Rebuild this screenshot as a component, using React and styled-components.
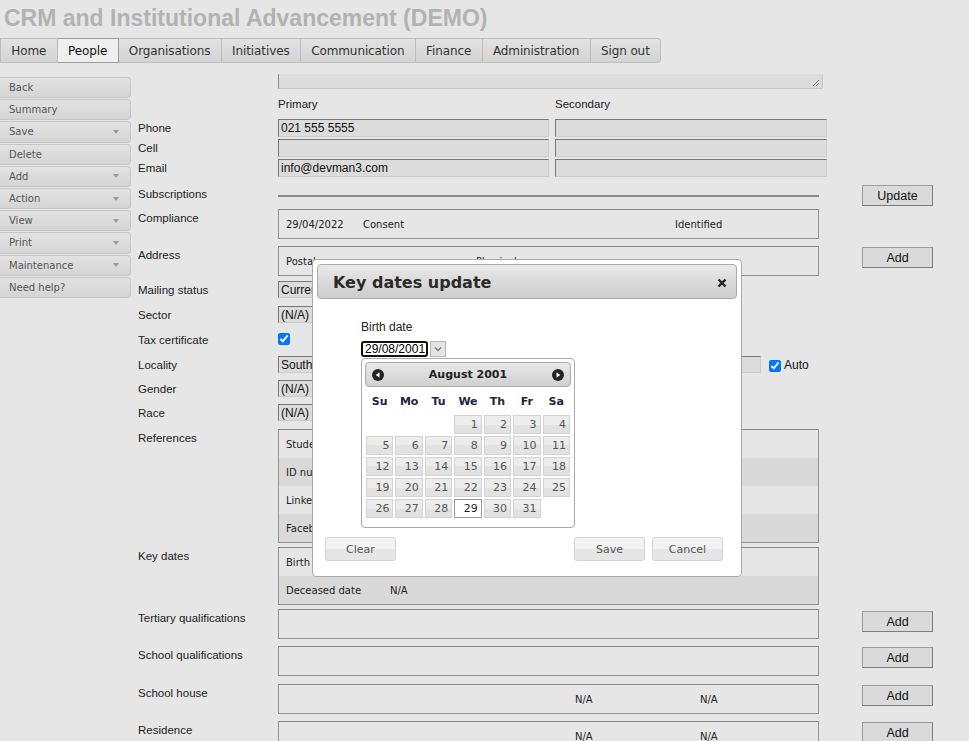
import React from 'react';
import styled, { createGlobalStyle } from 'styled-components';

const Global = createGlobalStyle`
  body {
    margin: 0;
    background: #e6e6e6;
    font-family: "Liberation Sans", Arial, sans-serif;
  }
`;

const Page = styled.div`
  position: relative;
  width: 969px;
  height: 741px;
  overflow: hidden;
`;

const Title = styled.h1`
  margin: 0;
  height: 38px;
  padding-left: 4px;
  font: bold 23px/37px "Liberation Sans", Arial, sans-serif;
  color: #b2b2b2;
`;

const NavBar = styled.nav`
  display: flex;
  height: 25px;
`;

const Tab = styled.div`
  display: flex;
  align-items: center;
  padding: 0 10.3px;
  font: 12px "DejaVu Sans", Verdana, sans-serif;
  letter-spacing: -0.1px;
  color: ${p => (p.$active ? '#111' : '#333')};
  background: ${p => (p.$active ? '#efefef' : 'linear-gradient(#e2e2e2, #d3d3d3)')};
  border: 1px solid ${p => (p.$active ? '#9d9d9d' : '#bdbdbd')};
  border-left: none;
  &:first-child { border-left: 1px solid #bdbdbd; }
  &:last-child { border-radius: 0 4px 4px 0; }
`;

const Main = styled.div`
  display: flex;
`;

const Sidebar = styled.div`
  width: 131px;
  margin-top: 14px;
  display: flex;
  flex-direction: column;
  gap: 1px;
`;

const SideButton = styled.div`
  height: 21.2px;
  box-sizing: border-box;
  display: flex;
  align-items: center;
  justify-content: space-between;
  padding: 0 11px 0 9px;
  font: 10px "DejaVu Sans", Verdana, sans-serif;
  color: #555;
  background: linear-gradient(#e2e2e2, #d5d5d5);
  border: 1px solid #c6c6c6;
  border-left: none;
  border-radius: 0 4px 4px 0;
`;

const Caret = styled.span`
  width: 0;
  height: 0;
  border-left: 3.5px solid transparent;
  border-right: 3.5px solid transparent;
  border-top: 4px solid #9a9a9a;
`;

const Content = styled.div`
  margin-left: 7px;
  padding-top: 11px;
  display: flex;
  flex-direction: column;
`;

const Row = styled.div`
  display: flex;
  align-items: flex-start;
  margin-top: ${p => p.$mt || 0}px;
`;

const Label = styled.div`
  width: 140px;
  flex: none;
  padding-top: 1px;
  margin-bottom: -1px;
  font-size: 11.5px;
  line-height: 17px;
  color: #222;
`;

const Field = styled.div`
  width: 549px;
  flex: none;
  display: flex;
  align-items: center;
  gap: ${p => (p.$gap === undefined ? 6 : p.$gap)}px;
`;

const Side = styled.div`
  margin-left: 35px;
  padding-top: ${p => (p.$pt === undefined ? 1 : p.$pt)}px;
`;

const TextArea = styled.div`
  position: relative;
  width: 545px;
  height: 15px;
  box-sizing: border-box;
  background: #dcdcdc;
  border-left: 1px solid #8a8a8a;
  border-bottom: 1px solid #c9c9c9;
  border-right: 1px solid #c9c9c9;
  svg { position: absolute; right: 2px; bottom: 1px; }
`;

const ColHead = styled.div`
  width: ${p => p.$w}px;
  font-size: 11.5px;
  line-height: 17px;
  color: #222;
`;

const Input = styled.div`
  width: ${p => p.$w}px;
  height: ${p => p.$h || 18}px;
  box-sizing: border-box;
  padding-left: 2px;
  font-size: 12px;
  line-height: 16px;
  color: #111;
  background: #dcdcdc;
  border: 1px solid #cbcbcb;
  border-top-color: #777;
  border-left-color: #777;
  white-space: nowrap;
  overflow: hidden;
`;

const Rule = styled.div`
  width: 541px;
  height: 2px;
  margin-top: 10px;
  background: #8a8a8a;
`;

const Box = styled.div`
  width: 541px;
  box-sizing: border-box;
  min-height: 30px;
  border: 1px solid #939393;
  border-top-color: #888;
`;

const BoxRow = styled.div`
  display: flex;
  align-items: center;
  height: ${p => p.$h || 28}px;
  padding-left: 7px;
  background: ${p => (p.$shade ? '#d9d9d9' : 'transparent')};
  font: 10px "DejaVu Sans", Verdana, sans-serif;
  color: #222;
`;

const Cell = styled.span`
  width: ${p => p.$w}px;
  flex: none;
  white-space: nowrap;
`;

const Check = styled.input`
  margin: 2px 0 0 0;
  width: 12px;
  height: 12px;
`;

const AutoLabel = styled.label`
  display: flex;
  align-items: center;
  gap: 3px;
  margin-left: 8px;
  font-size: 12px;
  color: #111;
`;

const ActionButton = styled.div`
  width: 71px;
  height: 21px;
  box-sizing: border-box;
  display: flex;
  align-items: center;
  justify-content: center;
  font-size: 12.5px;
  color: #111;
  background: #dadada;
  border: 1px solid #7d7d7d;
  border-top-color: #9c9c9c;
  border-left-color: #9c9c9c;
`;

/* dialog */

const Dialog = styled.div`
  position: absolute;
  left: 312px;
  top: 259px;
  width: 430px;
  box-sizing: border-box;
  padding: 4px;
  background: #fff;
  border: 1px solid #aaa;
  border-radius: 4px;
  font-family: "DejaVu Sans", Verdana, sans-serif;
`;

const TitleBar = styled.div`
  height: 35px;
  box-sizing: border-box;
  display: flex;
  align-items: center;
  justify-content: space-between;
  padding: 2px 11px 0 15px;
  background: linear-gradient(#e9e9e9, #cdcdcd);
  border: 1px solid #aaa;
  border-radius: 4px;
  font-weight: bold;
  font-size: 16px;
  color: #2a2a2a;
`;

const DialogBody = styled.div`
  height: 238px;
  padding: 22px 0 0 44px;
  box-sizing: border-box;
`;

const FieldLabel = styled.div`
  font: 12px "Liberation Sans", Arial, sans-serif;
  color: #222;
  line-height: 12px;
`;

const DateWrap = styled.div`
  position: relative;
  display: flex;
  gap: 2px;
  margin-top: 8px;
`;

const DateInput = styled.div`
  width: 67px;
  height: 16px;
  box-sizing: border-box;
  display: flex;
  align-items: center;
  padding-left: 2px;
  font: 12px "Liberation Sans", Arial, sans-serif;
  color: #000;
  border: 2px solid #111;
  border-radius: 3px;
`;

const Cursor = styled.span`
  width: 1px;
  height: 12px;
  margin-left: 1px;
  background: #000;
`;

const DropButton = styled.div`
  width: 16px;
  height: 16px;
  box-sizing: border-box;
  display: flex;
  align-items: center;
  justify-content: center;
  background: #e3e3e3;
  border: 1px solid #b5b5b5;
`;

const Calendar = styled.div`
  position: absolute;
  left: 0;
  top: 17px;
  width: 214px;
  height: 170px;
  box-sizing: border-box;
  padding: 3px;
  background: #fff;
  border: 1px solid #aaa;
  border-radius: 4px;
`;

const CalHeader = styled.div`
  height: 25px;
  box-sizing: border-box;
  display: flex;
  align-items: center;
  justify-content: space-between;
  padding: 0 6px;
  background: linear-gradient(#e9e9e9, #d0d0d0);
  border: 1px solid #aaa;
  border-radius: 4px;
  font-weight: bold;
  font-size: 11px;
  color: #222;
`;

const CalTable = styled.table`
  width: 100%;
  border-collapse: separate;
  border-spacing: 0;
  font-size: 11px;
  margin-top: 1px;
`;

const DayName = styled.th`
  height: 26px;
  padding: 0;
  font-weight: bold;
  color: #1c2640;
  text-align: center;
`;

const DayCell = styled.td`
  padding: 1px;
  height: 19px;
`;

const Day = styled.div`
  height: 19px;
  box-sizing: border-box;
  padding-right: 3px;
  text-align: right;
  line-height: 17px;
  color: ${p => (p.$sel ? '#222' : '#555')};
  background: ${p => (p.$sel ? '#fff' : 'linear-gradient(#ececec 50%, #e2e2e2 50%)')};
  border: 1px solid ${p => (p.$sel ? '#9a9a9a' : '#d3d3d3')};
`;

const ButtonPane = styled.div`
  display: flex;
  align-items: center;
  padding: 0 14px 0 8px;
  margin-bottom: 11px;
  gap: 7px;
`;

const DlgButton = styled.div`
  width: 71px;
  height: 24px;
  box-sizing: border-box;
  display: flex;
  align-items: center;
  justify-content: center;
  font-size: 11px;
  color: #555;
  background: linear-gradient(#f2f2f2 50%, #e6e6e6 50%);
  border: 1px solid #d3d3d3;
  border-radius: 3px;
  ${p => p.$push && 'margin-left: auto;'}
`;

const NavCircle = ({ dir }) => (
  <svg width="12" height="12" viewBox="0 0 12 12">
    <circle cx="6" cy="6" r="6" fill="#222" />
    {dir === 'prev' ? (
      <path d="M7.5 3.2 L3.8 6 L7.5 8.8 Z" fill="#fff" />
    ) : (
      <path d="M4.5 3.2 L8.2 6 L4.5 8.8 Z" fill="#fff" />
    )}
  </svg>
);

const sideItems = [
  ['Back'], ['Summary'], ['Save', 1], ['Delete'], ['Add', 1], ['Action', 1],
  ['View', 1], ['Print', 1], ['Maintenance', 1], ['Need help?'],
];

const tabs = ['Home', 'People', 'Organisations', 'Initiatives', 'Communication', 'Finance', 'Administration', 'Sign out'];

const weeks = [
  [null, null, null, 1, 2, 3, 4],
  [5, 6, 7, 8, 9, 10, 11],
  [12, 13, 14, 15, 16, 17, 18],
  [19, 20, 21, 22, 23, 24, 25],
  [26, 27, 28, 29, 30, 31, null],
];

const SelectRow = ({ mt, label, value, w = 300 }) => (
  <Row $mt={mt}>
    <Label>{label}</Label>
    <Field>
      <Input $w={w} $h={17}>{value}</Input>
    </Field>
  </Row>
);

const App = () => (
  <Page>
    <Global />
    <Title>CRM and Institutional Advancement (DEMO)</Title>
    <NavBar>
      {tabs.map(t => (
        <Tab key={t} $active={t === 'People'}>{t}</Tab>
      ))}
    </NavBar>
    <Main>
      <Sidebar>
        {sideItems.map(([name, drop]) => (
          <SideButton key={name}>
            {name}
            {drop && <Caret />}
          </SideButton>
        ))}
      </Sidebar>
      <Content>
        <Row>
          <Label />
          <TextArea>
            <svg width="8" height="8" viewBox="0 0 8 8">
              <path d="M7 1 L1 7 M7 4 L4 7" stroke="#777" strokeWidth="1" />
            </svg>
          </TextArea>
        </Row>
        <Row $mt={7}>
          <Label />
          <Field>
            <ColHead $w={271}>Primary</ColHead>
            <ColHead $w={272}>Secondary</ColHead>
          </Field>
        </Row>
        <Row $mt={6}>
          <Label>Phone</Label>
          <Field>
            <Input $w={271}>021 555 5555</Input>
            <Input $w={272} />
          </Field>
        </Row>
        <Row $mt={2}>
          <Label>Cell</Label>
          <Field>
            <Input $w={271} />
            <Input $w={272} />
          </Field>
        </Row>
        <Row $mt={2}>
          <Label>Email</Label>
          <Field>
            <Input $w={271}>info@devman3.com</Input>
            <Input $w={272} />
          </Field>
        </Row>
        <Row $mt={8}>
          <Label>Subscriptions</Label>
          <Field>
            <Rule />
          </Field>
          <Side $pt={0}>
            <ActionButton>Update</ActionButton>
          </Side>
        </Row>
        <Row $mt={3}>
          <Label>Compliance</Label>
          <Field>
            <Box>
              <BoxRow>
                <Cell $w={77}>29/04/2022</Cell>
                <Cell $w={312}>Consent</Cell>
                <Cell $w={80}>Identified</Cell>
              </BoxRow>
            </Box>
          </Field>
        </Row>
        <Row $mt={7}>
          <Label>Address</Label>
          <Field>
            <Box>
              <BoxRow>
                <Cell $w={190}>Postal</Cell>
                <Cell $w={200}>Physical</Cell>
              </BoxRow>
            </Box>
          </Field>
          <Side>
            <ActionButton>Add</ActionButton>
          </Side>
        </Row>
        <SelectRow mt={5} label="Mailing status" value="Current" />
        <SelectRow mt={8} label="Sector" value="(N/A)" />
        <Row $mt={8}>
          <Label>Tax certificate</Label>
          <Field>
            <Check type="checkbox" checked readOnly />
          </Field>
        </Row>
        <Row $mt={8}>
          <Label>Locality</Label>
          <Field $gap={0}>
            <Input $w={483} $h={17}>South Africa</Input>
            <AutoLabel>
              <Check type="checkbox" checked readOnly />
              Auto
            </AutoLabel>
          </Field>
        </Row>
        <SelectRow mt={7} label="Gender" value="(N/A)" />
        <SelectRow mt={7} label="Race" value="(N/A)" />
        <Row $mt={8}>
          <Label>References</Label>
          <Field>
            <Box>
              <BoxRow>Student number</BoxRow>
              <BoxRow $shade>ID number</BoxRow>
              <BoxRow>LinkedIn</BoxRow>
              <BoxRow $shade>Facebook</BoxRow>
            </Box>
          </Field>
        </Row>
        <Row $mt={4}>
          <Label>Key dates</Label>
          <Field>
            <Box>
              <BoxRow>
                <Cell $w={104}>Birth date</Cell>
                <Cell $w={80}>29/08/2001</Cell>
              </BoxRow>
              <BoxRow $shade>
                <Cell $w={104}>Deceased date</Cell>
                <Cell $w={80}>N/A</Cell>
              </BoxRow>
            </Box>
          </Field>
        </Row>
        <Row $mt={4}>
          <Label>Tertiary qualifications</Label>
          <Field>
            <Box />
          </Field>
          <Side $pt={2}>
            <ActionButton>Add</ActionButton>
          </Side>
        </Row>
        <Row $mt={7}>
          <Label>School qualifications</Label>
          <Field>
            <Box />
          </Field>
          <Side>
            <ActionButton>Add</ActionButton>
          </Side>
        </Row>
        <Row $mt={8}>
          <Label>School house</Label>
          <Field>
            <Box>
              <BoxRow>
                <Cell $w={289} />
                <Cell $w={125}>N/A</Cell>
                <Cell $w={60}>N/A</Cell>
              </BoxRow>
            </Box>
          </Field>
          <Side>
            <ActionButton>Add</ActionButton>
          </Side>
        </Row>
        <Row $mt={7}>
          <Label>Residence</Label>
          <Field>
            <Box>
              <BoxRow>
                <Cell $w={289} />
                <Cell $w={125}>N/A</Cell>
                <Cell $w={60}>N/A</Cell>
              </BoxRow>
            </Box>
          </Field>
          <Side>
            <ActionButton>Add</ActionButton>
          </Side>
        </Row>
      </Content>
    </Main>

    <Dialog>
      <TitleBar>
        Key dates update
        <svg width="10" height="10" viewBox="0 0 10 10" style={{ marginRight: -2 }}>
          <path d="M1.5 1.5 L8.5 8.5 M8.5 1.5 L1.5 8.5" stroke="#222" strokeWidth="2.4" />
        </svg>
      </TitleBar>
      <DialogBody>
        <FieldLabel>Birth date</FieldLabel>
        <DateWrap>
          <DateInput>
            29/08/2001
            <Cursor />
          </DateInput>
          <DropButton>
            <svg width="8" height="6" viewBox="0 0 8 6">
              <path d="M1 1.5 L4 4.5 L7 1.5" stroke="#777" strokeWidth="1.3" fill="none" />
            </svg>
          </DropButton>
          <Calendar>
            <CalHeader>
              <NavCircle dir="prev" />
              August 2001
              <NavCircle dir="next" />
            </CalHeader>
            <CalTable>
              <thead>
                <tr>
                  {['Su', 'Mo', 'Tu', 'We', 'Th', 'Fr', 'Sa'].map(d => (
                    <DayName key={d}>{d}</DayName>
                  ))}
                </tr>
              </thead>
              <tbody>
                {weeks.map((w, i) => (
                  <tr key={i}>
                    {w.map((d, j) => (
                      <DayCell key={j}>
                        {d && <Day $sel={d === 29}>{d}</Day>}
                      </DayCell>
                    ))}
                  </tr>
                ))}
              </tbody>
            </CalTable>
          </Calendar>
        </DateWrap>
      </DialogBody>
      <ButtonPane>
        <DlgButton>Clear</DlgButton>
        <DlgButton $push>Save</DlgButton>
        <DlgButton>Cancel</DlgButton>
      </ButtonPane>
    </Dialog>
  </Page>
);

export default App;
